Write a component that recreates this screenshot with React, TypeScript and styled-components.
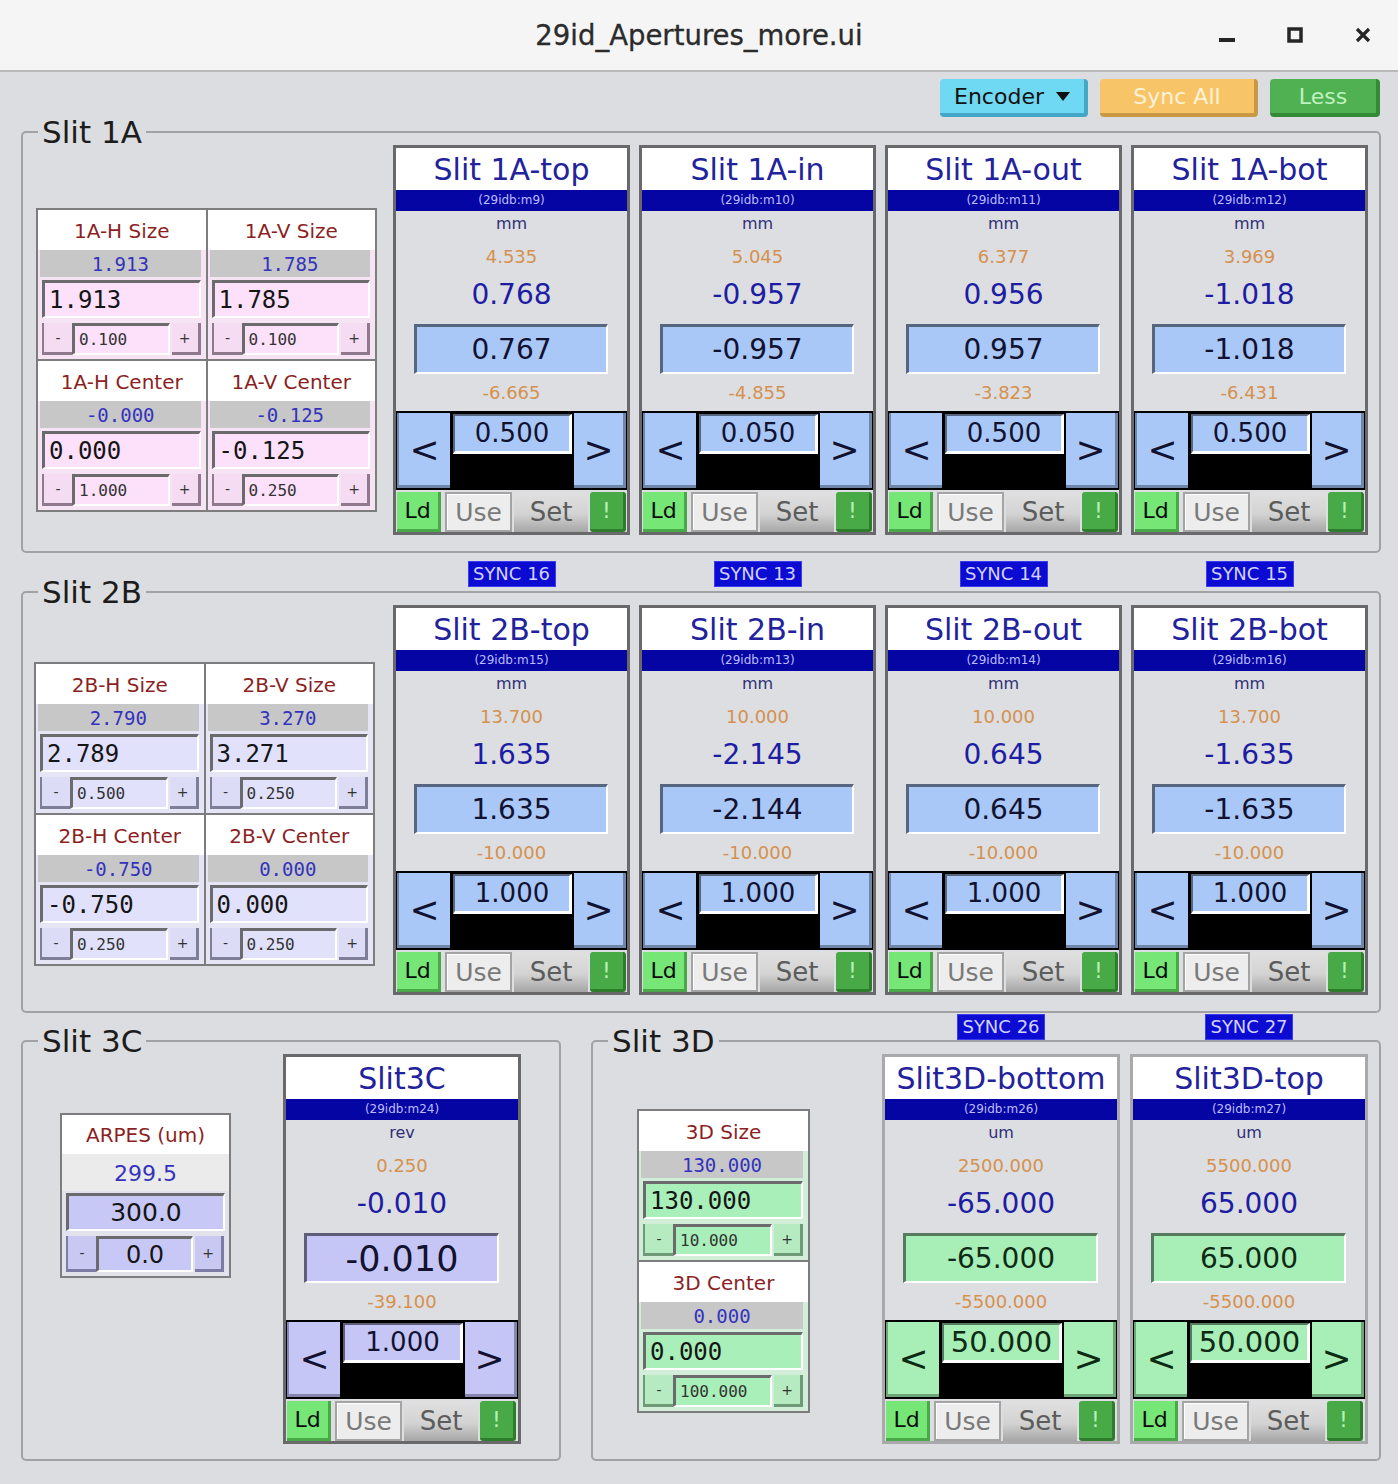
import React from 'react';
import styled, { createGlobalStyle, css } from 'styled-components';

const GlobalStyle = createGlobalStyle`
  html, body {
    margin: 0;
    padding: 0;
    background: #dcdde0;
  }
  body {
    font-family: "DejaVu Sans", "Liberation Sans", sans-serif;
  }
  * {
    box-sizing: border-box;
  }
`;

const MONO = `"DejaVu Sans Mono", "Liberation Mono", monospace`;

type MotorTone = 'blue' | 'lavender' | 'green';

const motorTones: Record<MotorTone, { fill: string; dark: string; inset: string; text: string }> = {
  blue: { fill: '#a9c8f7', dark: '#6f86a9', inset: '#56667e', text: '#121230' },
  lavender: { fill: '#c6c6f6', dark: '#8585ad', inset: '#5e5e78', text: '#121230' },
  green: { fill: '#a7efb7', dark: '#6ea67a', inset: '#567a5e', text: '#0f2a14' },
};

type TableTone = 'pink' | 'lilac' | 'green' | 'violet';

const tableTones: Record<TableTone, { body: string; input: string; button: string; shade: string }> = {
  pink: { body: '#f6e3f4', input: '#fde1fb', button: '#f6dcf3', shade: '#8e7a8c' },
  lilac: { body: '#e5e5f5', input: '#e1e1fb', button: '#dcdcf6', shade: '#7e7e98' },
  green: { body: '#d3eed8', input: '#a9efb9', button: '#b6ebc1', shade: '#6e9a78' },
  violet: { body: '#e2e2ec', input: '#c8c8f7', button: '#c8c8f3', shade: '#7c7ca4' },
};

const bevel = (dark: string, side: 'left' | 'right') => css`
  border-style: solid;
  border-color: transparent;
  border-width: 0;
  border-bottom: 3px solid ${dark};
  ${side === 'left' ? `border-left: 2px solid ${dark};` : `border-right: 3px solid ${dark};`}
`;

const inset = (dark: string) => css`
  border-style: solid;
  border-width: 3px 2px 2px 3px;
  border-color: ${dark} #ffffff #ffffff ${dark};
`;

/* ---------- window chrome ---------- */

const Window = styled.div`
  width: 1398px;
  height: 1484px;
  display: flex;
  flex-direction: column;
  background: #dcdde0;
  overflow: hidden;
`;

const TitleBar = styled.header`
  flex-shrink: 0;
  height: 72px;
  display: grid;
  grid-template-columns: 1fr auto 1fr;
  align-items: center;
  background: #f5f5f6;
  border-bottom: 2px solid #b9b9bb;
`;

const WindowTitle = styled.div`
  grid-column: 2;
  font-size: 27.5px;
  color: #2b2b2b;
  -webkit-text-stroke: 0.3px #2b2b2b;
`;

const WindowControls = styled.div`
  justify-self: end;
  display: flex;
  gap: 28px;
  padding-right: 15px;
`;

const ControlButton = styled.div`
  width: 40px;
  height: 40px;
  display: flex;
  align-items: center;
  justify-content: center;
  color: #262626;
`;

const Content = styled.main`
  display: flex;
  flex-direction: column;
  padding: 7px 17px 0 21px;
`;

const Toolbar = styled.div`
  display: flex;
  justify-content: flex-end;
  gap: 12px;
  padding-right: 1px;
  margin-bottom: 2px;
`;

type ToolButtonProps = { $bg: string; $edge: string; $fg: string; $w: number };

const ToolButton = styled.div<ToolButtonProps>`
  width: ${(p) => p.$w}px;
  height: 38px;
  display: flex;
  align-items: center;
  justify-content: center;
  gap: 12px;
  background: ${(p) => p.$bg};
  color: ${(p) => p.$fg};
  border-right: 4px solid ${(p) => p.$edge};
  border-bottom: 4px solid ${(p) => p.$edge};
  border-radius: 4px;
  font-size: 22px;
`;

/* ---------- group boxes ---------- */

const Group = styled.fieldset`
  margin: 0;
  padding: 0;
  min-width: 0;
  border: 2px solid #a2a2a5;
  border-radius: 5px;
`;

const GroupTitle = styled.legend`
  margin-left: 15px;
  padding: 0 4px;
  font-size: 31px;
  line-height: 26px;
  color: #1c1c1c;
`;

const GroupBody = styled.div<{ $pad: string }>`
  display: flex;
  align-items: flex-start;
  justify-content: space-between;
  padding: ${(p) => p.$pad};
`;

const MotorRow = styled.div<{ $gap: number }>`
  display: flex;
  gap: ${(p) => p.$gap}px;
`;

const SyncRow = styled.div<{ $gap: number; $margin: string }>`
  display: flex;
  justify-content: flex-end;
  gap: ${(p) => p.$gap}px;
  height: 26px;
  padding-right: 13px;
  margin: ${(p) => p.$margin};
`;

const SyncSlot = styled.div<{ $w: number }>`
  width: ${(p) => p.$w}px;
  display: flex;
  justify-content: center;
`;

const SyncTag = styled.div`
  width: 88px;
  height: 26px;
  background: #0b0bd2;
  border: 1px solid #3b3bef;
  color: #d2d2ff;
  font-size: 18px;
  line-height: 24px;
  text-align: center;
  white-space: nowrap;
`;

const BottomRow = styled.div`
  display: grid;
  grid-template-columns: 540px 790px;
  column-gap: 30px;
`;

/* ---------- motor panel ---------- */

const Panel = styled.div<{ $light?: boolean; $w: number }>`
  width: ${(p) => p.$w}px;
  height: 390px;
  flex-shrink: 0;
  display: flex;
  flex-direction: column;
  border: 3px solid ${(p) => (p.$light ? '#a9a9ac' : '#69696c')};
  background: #dddee1;
`;

const PanelTitle = styled.div`
  height: 42px;
  background: #ffffff;
  color: #22229c;
  font-size: 30px;
  line-height: 44px;
  text-align: center;
  white-space: nowrap;
  overflow: hidden;
`;

const PvBar = styled.div`
  height: 21px;
  background: #0505a4;
  color: #bcbcff;
  font-size: 12px;
  line-height: 21px;
  text-align: center;
`;

const Unit = styled.div`
  height: 26px;
  line-height: 26px;
  text-align: center;
  font-size: 16px;
  color: #2f2f78;
`;

const Limit = styled.div<{ $h: number }>`
  height: ${(p) => p.$h}px;
  line-height: ${(p) => p.$h}px;
  text-align: center;
  font-size: 18px;
  color: #d4914f;
`;

const Readback = styled.div`
  height: 34px;
  line-height: 36px;
  text-align: center;
  font-size: 28px;
  color: #1d1da4;
`;

const Setpoint = styled.div<{ $tone: MotorTone; $large?: boolean }>`
  margin: 13px 19px 0 18px;
  height: 50px;
  ${(p) => inset(motorTones[p.$tone].inset)};
  background: ${(p) => motorTones[p.$tone].fill};
  color: ${(p) => motorTones[p.$tone].text};
  font-size: ${(p) => (p.$large ? 35 : 28)}px;
  line-height: 46px;
  text-align: center;
`;

const Tweak = styled.div`
  height: 79px;
  display: grid;
  grid-template-columns: 53px 1fr 52px;
  column-gap: 2px;
  padding: 2px 1px;
  background: #000000;
`;

const StepButton = styled.div<{ $tone: MotorTone; $side: 'left' | 'right' }>`
  display: flex;
  align-items: center;
  justify-content: center;
  background: ${(p) => motorTones[p.$tone].fill};
  ${(p) => bevel(motorTones[p.$tone].dark, p.$side)};
  color: ${(p) => motorTones[p.$tone].text};
  font-size: 36px;
  line-height: 1;
  padding-top: 2px;
`;

const StepValue = styled.div<{ $tone: MotorTone; $big?: boolean }>`
  margin: 1px 0 0 1px;
  height: 40px;
  border-style: solid;
  border-width: 2px 3px 3px 2px;
  border-color: ${(p) => motorTones[p.$tone].inset} #ffffff #ffffff ${(p) => motorTones[p.$tone].inset};
  background: ${(p) => motorTones[p.$tone].fill};
  color: ${(p) => motorTones[p.$tone].text};
  font-size: ${(p) => (p.$big ? 29 : 26)}px;
  line-height: 34px;
  text-align: center;
`;

const ButtonRow = styled.div`
  margin-top: 2px;
  height: 40px;
  display: flex;
  padding: 0 1px;
`;

type ActionKind = 'ld' | 'use' | 'set' | 'bang';

const actionStyles: Record<ActionKind, ReturnType<typeof css>> = {
  ld: css`
    width: 44px;
    background: #76e676;
    border-right: 3px solid #49a949;
    border-bottom: 3px solid #49a949;
    color: #0c0c0c;
    font-size: 22px;
  `,
  use: css`
    width: 67px;
    margin-left: 4px;
    background: #ededed;
    border: 2px solid #a4a4a4;
    box-shadow: inset 1px 1px 0 #ffffff;
    color: #7a7a7a;
    font-size: 25px;
  `,
  set: css`
    width: 74px;
    margin-left: 2px;
    background: linear-gradient(#e0e0e0, #d3d3d3 55%, #a6a6a6);
    color: #5c5c5c;
    font-size: 26px;
  `,
  bang: css`
    width: 36px;
    margin-left: 2px;
    background: #47aa47;
    border-right: 3px solid #2d7d2d;
    border-bottom: 3px solid #2d7d2d;
    border-radius: 3px;
    color: #b4f1b4;
    font-size: 22px;
  `,
};

const Action = styled.div<{ $kind: ActionKind }>`
  display: flex;
  align-items: center;
  justify-content: center;
  ${(p) => actionStyles[p.$kind]};
`;

type MotorProps = {
  title: string;
  pv: string;
  unit: string;
  hi: string;
  rbv: string;
  val: string;
  lo: string;
  twv: string;
  tone: MotorTone;
  width?: number;
  light?: boolean;
  large?: boolean;
  bigStep?: boolean;
};

const MotorPanel = ({ title, pv, unit, hi, rbv, val, lo, twv, tone, width = 237, light, large, bigStep }: MotorProps) => (
  <Panel $light={light} $w={width}>
    <PanelTitle>{title}</PanelTitle>
    <PvBar>({pv})</PvBar>
    <Unit>{unit}</Unit>
    <Limit $h={40}>{hi}</Limit>
    <Readback>{rbv}</Readback>
    <Setpoint $tone={tone} $large={large}>
      {val}
    </Setpoint>
    <Limit $h={37}>{lo}</Limit>
    <Tweak>
      <StepButton $tone={tone} $side='left'>
        &lt;
      </StepButton>
      <StepValue $tone={tone} $big={bigStep}>
        {twv}
      </StepValue>
      <StepButton $tone={tone} $side='right'>
        &gt;
      </StepButton>
    </Tweak>
    <ButtonRow>
      <Action $kind='ld'>Ld</Action>
      <Action $kind='use'>Use</Action>
      <Action $kind='set'>Set</Action>
      <Action $kind='bang'>!</Action>
    </ButtonRow>
  </Panel>
);

/* ---------- size / center tables ---------- */

const SlitTable = styled.div<{ $cols: number; $top: number; $w: number }>`
  margin-top: ${(p) => p.$top}px;
  width: ${(p) => p.$w}px;
  flex-shrink: 0;
  display: grid;
  grid-template-columns: repeat(${(p) => p.$cols}, 1fr);
  gap: 2px;
  background: #7d7d80;
  border: 2px solid #7d7d80;
`;

const Cell = styled.div<{ $tone: TableTone }>`
  display: flex;
  flex-direction: column;
  background: ${(p) => tableTones[p.$tone].body};
  padding-bottom: 4px;
  min-width: 0;
`;

const CellLabel = styled.div<{ $h: number }>`
  height: ${(p) => p.$h}px;
  line-height: ${(p) => p.$h + 2}px;
  background: #ffffff;
  text-align: center;
  color: #8c1f1f;
  font-size: 20px;
  white-space: nowrap;
`;

const CellReadback = styled.div<{ $sans?: boolean }>`
  text-align: center;
  color: #3333bd;
  ${(p) =>
    p.$sans
      ? css`
          height: 37px;
          line-height: 39px;
          background: #ebebeb;
          font-size: 22px;
        `
      : css`
          height: 27px;
          line-height: 29px;
          margin: 0 5px 0 2px;
          background: #c7c7c7;
          font-family: ${MONO};
          font-size: 19px;
        `}
`;

const CellInput = styled.div<{ $tone: TableTone; $sans?: boolean }>`
  height: 38px;
  margin: ${(p) => (p.$sans ? '2px 4px 0 4px' : '3px 5px 0 4px')};
  ${inset('#6b6b6e')};
  background: ${(p) => tableTones[p.$tone].input};
  color: #151515;
  ${(p) =>
    p.$sans
      ? css`
          font-size: 25px;
          line-height: 34px;
          text-align: center;
        `
      : css`
          font-family: ${MONO};
          font-size: 24px;
          line-height: 35px;
          padding-left: 4px;
        `}
`;

const CellTweak = styled.div<{ $h: number }>`
  height: ${(p) => p.$h}px;
  margin: 5px 5px 0 4px;
  display: flex;
`;

const CellStep = styled.div<{ $tone: TableTone; $side: 'left' | 'right' }>`
  width: ${(p) => (p.$side === 'left' ? 30 : 29)}px;
  flex-shrink: 0;
  margin-left: ${(p) => (p.$side === 'right' ? 2 : 0)}px;
  display: flex;
  align-items: center;
  justify-content: center;
  background: ${(p) => tableTones[p.$tone].button};
  ${(p) => bevel(tableTones[p.$tone].shade, p.$side)};
  color: #333333;
  font-size: 14px;
`;

const CellStepValue = styled.div<{ $tone: TableTone; $sans?: boolean }>`
  flex: 1;
  min-width: 0;
  ${inset('#6b6b6e')};
  background: ${(p) => tableTones[p.$tone].input};
  color: #333333;
  ${(p) =>
    p.$sans
      ? css`
          font-size: 24px;
          line-height: 32px;
          text-align: center;
          color: #161616;
        `
      : css`
          font-family: ${MONO};
          font-size: 16px;
          line-height: 27px;
          padding-left: 4px;
        `}
`;

type CellData = { label: string; rbv: string; val: string; step: string };

const SlitCell = ({ cell, tone, sans }: { cell: CellData; tone: TableTone; sans?: boolean }) => (
  <Cell $tone={tone}>
    <CellLabel $h={sans ? 39 : 40}>{cell.label}</CellLabel>
    <CellReadback $sans={sans}>{cell.rbv}</CellReadback>
    <CellInput $tone={tone} $sans={sans}>
      {cell.val}
    </CellInput>
    <CellTweak $h={sans ? 36 : 32}>
      <CellStep $tone={tone} $side='left'>
        -
      </CellStep>
      <CellStepValue $tone={tone} $sans={sans}>
        {cell.step}
      </CellStepValue>
      <CellStep $tone={tone} $side='right'>
        +
      </CellStep>
    </CellTweak>
  </Cell>
);

/* ---------- data ---------- */

type MotorData = Omit<MotorProps, 'tone' | 'width' | 'light' | 'large' | 'bigStep'>;

const slit1A: MotorData[] = [
  { title: 'Slit 1A-top', pv: '29idb:m9', unit: 'mm', hi: '4.535', rbv: '0.768', val: '0.767', lo: '-6.665', twv: '0.500' },
  { title: 'Slit 1A-in', pv: '29idb:m10', unit: 'mm', hi: '5.045', rbv: '-0.957', val: '-0.957', lo: '-4.855', twv: '0.050' },
  { title: 'Slit 1A-out', pv: '29idb:m11', unit: 'mm', hi: '6.377', rbv: '0.956', val: '0.957', lo: '-3.823', twv: '0.500' },
  { title: 'Slit 1A-bot', pv: '29idb:m12', unit: 'mm', hi: '3.969', rbv: '-1.018', val: '-1.018', lo: '-6.431', twv: '0.500' },
];

const slit2B: MotorData[] = [
  { title: 'Slit 2B-top', pv: '29idb:m15', unit: 'mm', hi: '13.700', rbv: '1.635', val: '1.635', lo: '-10.000', twv: '1.000' },
  { title: 'Slit 2B-in', pv: '29idb:m13', unit: 'mm', hi: '10.000', rbv: '-2.145', val: '-2.144', lo: '-10.000', twv: '1.000' },
  { title: 'Slit 2B-out', pv: '29idb:m14', unit: 'mm', hi: '10.000', rbv: '0.645', val: '0.645', lo: '-10.000', twv: '1.000' },
  { title: 'Slit 2B-bot', pv: '29idb:m16', unit: 'mm', hi: '13.700', rbv: '-1.635', val: '-1.635', lo: '-10.000', twv: '1.000' },
];

const slit3D: MotorData[] = [
  { title: 'Slit3D-bottom', pv: '29idb:m26', unit: 'um', hi: '2500.000', rbv: '-65.000', val: '-65.000', lo: '-5500.000', twv: '50.000' },
  { title: 'Slit3D-top', pv: '29idb:m27', unit: 'um', hi: '5500.000', rbv: '65.000', val: '65.000', lo: '-5500.000', twv: '50.000' },
];

const cells1A: CellData[] = [
  { label: '1A-H Size', rbv: '1.913', val: '1.913', step: '0.100' },
  { label: '1A-V Size', rbv: '1.785', val: '1.785', step: '0.100' },
  { label: '1A-H Center', rbv: '-0.000', val: '0.000', step: '1.000' },
  { label: '1A-V Center', rbv: '-0.125', val: '-0.125', step: '0.250' },
];

const cells2B: CellData[] = [
  { label: '2B-H Size', rbv: '2.790', val: '2.789', step: '0.500' },
  { label: '2B-V Size', rbv: '3.270', val: '3.271', step: '0.250' },
  { label: '2B-H Center', rbv: '-0.750', val: '-0.750', step: '0.250' },
  { label: '2B-V Center', rbv: '0.000', val: '0.000', step: '0.250' },
];

const cells3D: CellData[] = [
  { label: '3D Size', rbv: '130.000', val: '130.000', step: '10.000' },
  { label: '3D Center', rbv: '0.000', val: '0.000', step: '100.000' },
];

const arpes: CellData = { label: 'ARPES (um)', rbv: '299.5', val: '300.0', step: '0.0' };

/* ---------- icons ---------- */

const MinimizeIcon = () => (
  <svg width='16' height='16' viewBox='0 0 16 16'>
    <rect x='0' y='11' width='16' height='4' fill='currentColor' />
  </svg>
);

const MaximizeIcon = () => (
  <svg width='16' height='16' viewBox='0 0 16 16'>
    <rect x='2' y='2' width='12' height='12' fill='none' stroke='currentColor' strokeWidth='3.5' />
  </svg>
);

const CloseIcon = () => (
  <svg width='16' height='16' viewBox='0 0 16 16'>
    <path d='M2 2 L14 14 M14 2 L2 14' stroke='currentColor' strokeWidth='3.2' />
  </svg>
);

const DropArrow = () => (
  <svg width='14' height='9' viewBox='0 0 14 9'>
    <polygon points='0,0 14,0 7,9' fill='#111' />
  </svg>
);

/* ---------- app ---------- */

const App = () => (
  <>
    <GlobalStyle />
    <Window>
      <TitleBar>
        <WindowTitle>29id_Apertures_more.ui</WindowTitle>
        <WindowControls>
          <ControlButton>
            <MinimizeIcon />
          </ControlButton>
          <ControlButton>
            <MaximizeIcon />
          </ControlButton>
          <ControlButton>
            <CloseIcon />
          </ControlButton>
        </WindowControls>
      </TitleBar>

      <Content>
        <Toolbar>
          <ToolButton $bg='#6fd8f3' $edge='#45a7c6' $fg='#111111' $w={148}>
            Encoder
            <DropArrow />
          </ToolButton>
          <ToolButton $bg='#f8c468' $edge='#c99844' $fg='#fff2d6' $w={158}>
            Sync All
          </ToolButton>
          <ToolButton $bg='#4fb152' $edge='#358a38' $fg='#bff2bf' $w={110}>
            Less
          </ToolButton>
        </Toolbar>

        <Group>
          <GroupTitle>Slit 1A</GroupTitle>
          <GroupBody $pad='0 11px 16px 13px'>
            <SlitTable $cols={2} $top={63} $w={341}>
              {cells1A.map((c) => (
                <SlitCell key={c.label} cell={c} tone='pink' />
              ))}
            </SlitTable>
            <MotorRow $gap={9}>
              {slit1A.map((m) => (
                <MotorPanel key={m.title} {...m} tone='blue' />
              ))}
            </MotorRow>
          </GroupBody>
        </Group>

        <SyncRow $gap={9} $margin='8px 0 -8px'>
          {['SYNC 16', 'SYNC 13', 'SYNC 14', 'SYNC 15'].map((s) => (
            <SyncSlot key={s} $w={237}>
              <SyncTag>{s}</SyncTag>
            </SyncSlot>
          ))}
        </SyncRow>

        <Group>
          <GroupTitle>Slit 2B</GroupTitle>
          <GroupBody $pad='0 11px 16px 11px'>
            <SlitTable $cols={2} $top={57} $w={341}>
              {cells2B.map((c) => (
                <SlitCell key={c.label} cell={c} tone='lilac' />
              ))}
            </SlitTable>
            <MotorRow $gap={9}>
              {slit2B.map((m) => (
                <MotorPanel key={m.title} {...m} tone='blue' />
              ))}
            </MotorRow>
          </GroupBody>
        </Group>

        <SyncRow $gap={10} $margin='1px 0 -12px'>
          {['SYNC 26', 'SYNC 27'].map((s) => (
            <SyncSlot key={s} $w={238}>
              <SyncTag>{s}</SyncTag>
            </SyncSlot>
          ))}
        </SyncRow>

        <BottomRow>
          <Group>
            <GroupTitle>Slit 3C</GroupTitle>
            <GroupBody $pad='0 38px 15px 37px'>
              <SlitTable $cols={1} $top={59} $w={171}>
                <SlitCell cell={arpes} tone='violet' sans />
              </SlitTable>
              <MotorPanel
                title='Slit3C'
                pv='29idb:m24'
                unit='rev'
                hi='0.250'
                rbv='-0.010'
                val='-0.010'
                lo='-39.100'
                twv='1.000'
                tone='lavender'
                width={238}
                large
              />
            </GroupBody>
          </Group>

          <Group>
            <GroupTitle>Slit 3D</GroupTitle>
            <GroupBody $pad='0 11px 15px 44px'>
              <SlitTable $cols={1} $top={55} $w={173}>
                {cells3D.map((c) => (
                  <SlitCell key={c.label} cell={c} tone='green' />
                ))}
              </SlitTable>
              <MotorRow $gap={10}>
                {slit3D.map((m) => (
                  <MotorPanel key={m.title} {...m} tone='green' width={238} light bigStep />
                ))}
              </MotorRow>
            </GroupBody>
          </Group>
        </BottomRow>
      </Content>
    </Window>
  </>
);

export default App;
